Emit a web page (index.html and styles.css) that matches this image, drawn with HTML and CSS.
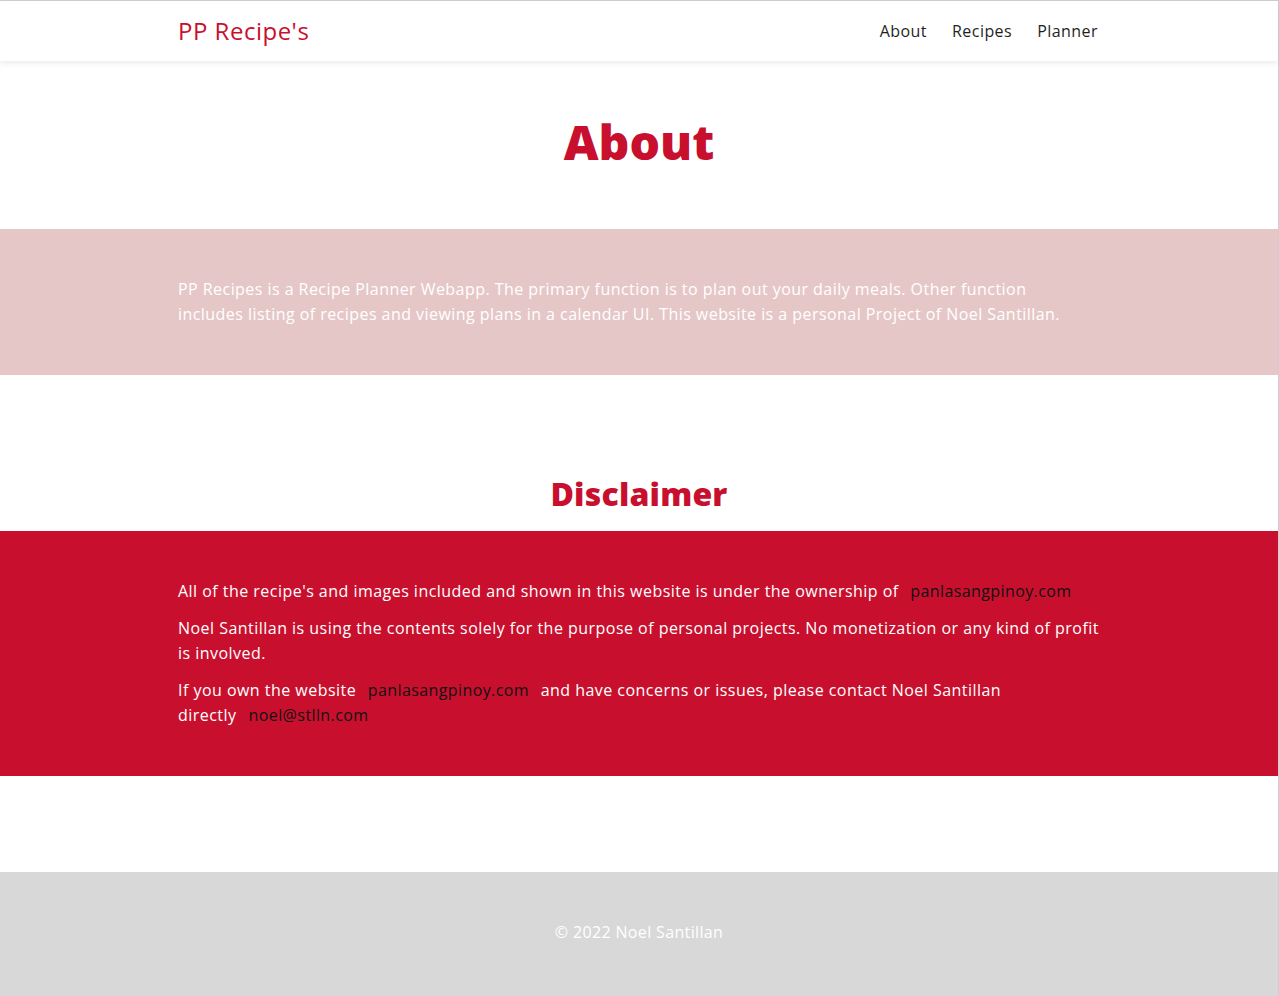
FILE: index.html
```html
<!DOCTYPE html>
<html lang="en">
<head>
<meta charset="utf-8">
<title>About - PP Recipe's</title>
<link rel="stylesheet" href="styles.css">
</head>
<body>
<div class="frame">
  <header class="navbar">
    <div class="container nav-inner">
      <a class="brand" href="#">PP Recipe's</a>
      <nav class="nav-links">
        <a href="#">About</a>
        <a href="#">Recipes</a>
        <a href="#">Planner</a>
      </nav>
    </div>
  </header>

  <section class="title-section">
    <h1 class="page-title">About</h1>
  </section>

  <section class="about-band">
    <div class="container">
      <p>PP Recipes is a Recipe Planner Webapp. The primary function is to plan out your daily meals. Other function includes listing of recipes and viewing plans in a calendar UI. This website is a personal Project of Noel Santillan.</p>
    </div>
  </section>

  <section class="disclaimer-head">
    <h2 class="section-title">Disclaimer</h2>
  </section>

  <section class="disclaimer-band">
    <div class="container">
      <p>All of the recipe's and images included and shown in this website is under the ownership of <a class="ext" href="#">panlasangpinoy.com</a></p>
      <p>Noel Santillan is using the contents solely for the purpose of personal projects. No monetization or any kind of profit is involved.</p>
      <p>If you own the website <a class="ext" href="#">panlasangpinoy.com</a> and have concerns or issues, please contact Noel Santillan <span class="nowrap">directly<a class="ext" href="#">noel@stlln.com</a></span></p>
    </div>
  </section>

  <div class="spacer"></div>

  <footer class="footer">
    <p>© 2022 Noel Santillan</p>
  </footer>
</div>
</body>
</html>
```

FILE: styles.css
```css
* { box-sizing: border-box; }

html, body {
  margin: 0;
  padding: 0;
  background: #ffffff;
}

body {
  font-family: "Open Sans", "Noto Sans", "Liberation Sans", sans-serif;
  font-size: 16px;
  line-height: 25px;
  color: #222;
}

.frame {
  border-top: 1px solid #cfcfcf;
  border-right: 1px solid #cfcfcf;
  min-height: 995px;
}

.container {
  width: 922px;
  margin: 0 auto;
}

a { text-decoration: none; }

.navbar {
  height: 60px;
  background: #fff;
  box-shadow: 0 2px 6px rgba(0, 0, 0, 0.09);
  position: relative;
  z-index: 1;
}

.nav-inner {
  height: 100%;
  display: flex;
  align-items: center;
  justify-content: space-between;
}

.brand {
  color: #c8102e;
  font-size: 24px;
  line-height: 30px;
  letter-spacing: 0.5px;
}

.nav-links {
  display: flex;
  gap: 25px;
  padding-right: 2px;
}

.nav-links a {
  color: #1f1f1f;
  font-size: 16px;
  letter-spacing: 0.45px;
}

.title-section {
  height: 168px;
  display: flex;
  align-items: center;
  justify-content: center;
}

.page-title {
  margin: 0;
  color: #c8102e;
  font-size: 48px;
  line-height: 58px;
  font-weight: 800;
  padding-bottom: 6px;
}

.about-band {
  background: #e6c7c7;
  height: 146px;
  padding-top: 48px;
}

.about-band p {
  margin: 0;
  max-width: 900px;
  color: #ffffff;
  letter-spacing: 0.45px;
}

.disclaimer-head {
  height: 156px;
  display: flex;
  align-items: flex-end;
  justify-content: center;
  padding-bottom: 17px;
}

.section-title {
  margin: 0;
  color: #c8102e;
  font-size: 32px;
  line-height: 40px;
  font-weight: 800;
  letter-spacing: 0.2px;
}

.disclaimer-band {
  background: #c8102e;
  height: 245px;
  padding-top: 48px;
}

.disclaimer-band p {
  margin: 0 0 12px;
  color: #ffffff;
  letter-spacing: 0.47px;
}

.ext {
  color: #111;
  padding: 0 7px;
  letter-spacing: 0.4px;
}

.nowrap { white-space: nowrap; }
.nowrap .ext { margin-left: 5px; }

.spacer { height: 96px; }

.footer {
  background: #d8d8d8;
  height: 124px;
  display: flex;
  align-items: center;
  justify-content: center;
}

.footer p {
  margin: 0;
  color: #ffffff;
  letter-spacing: 0.35px;
  padding-bottom: 4px;
}
```
